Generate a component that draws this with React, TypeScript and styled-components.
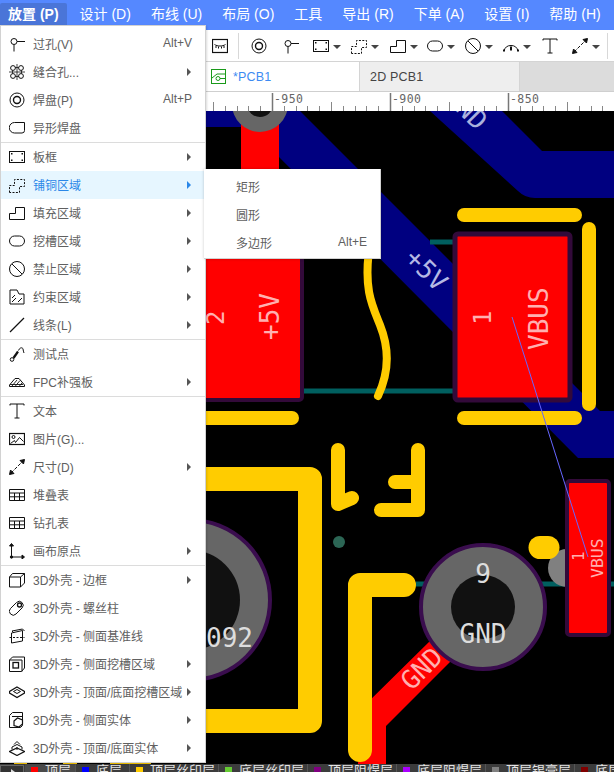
import React from "react";
import styled, { createGlobalStyle } from "styled-components";

const Global = createGlobalStyle`
  html, body { margin: 0; padding: 0; background: #fff; }
  body { font-family: "Liberation Sans", "Noto Sans CJK SC", sans-serif; }
  #root { width: 614px; height: 772px; overflow: hidden; }
`;

const Page = styled.div`
  position: relative;
  width: 614px;
  height: 772px;
  overflow: hidden;
  display: flex;
  flex-direction: column;
`;
const TopBar = styled.div`
  height: 30px;
  flex: none;
  background: #5588ff;
  display: flex;
  align-items: flex-start;
  padding-top: 3px;
  box-sizing: border-box;
`;
const TopItem = styled.div<{ $active?: boolean }>`
  height: 22px;
  line-height: 22px;
  padding: 0 ${(p) => (p.$active ? "8px" : "10px")};
  margin-right: ${(p) => (p.$active ? "3px" : "0")};
  font-size: 14px;
  white-space: nowrap;
  color: #fff;
  font-weight: ${(p) => (p.$active ? 700 : 400)};
  background: ${(p) => (p.$active ? "#4a75d8" : "transparent")};
  border-radius: 2px 2px 0 0;
`;
const Toolbar = styled.div`
  height: 32px;
  flex: none;
  background: #fff;
  border-bottom: 1px solid #d4d4d4;
  box-sizing: border-box;
  display: flex;
  align-items: center;
  padding-left: 212px;
`;
const ToolSep = styled.div<{ $l?: number; $r?: number }>`
  width: 1px;
  height: 26px;
  flex: none;
  background: #d8d8d8;
  margin-left: ${(p) => p.$l ?? 0}px;
  margin-right: ${(p) => p.$r ?? 0}px;
`;
const ToolBtn = styled.div<{ $w: number }>`
  width: ${(p) => p.$w}px;
  display: flex;
  align-items: center;
  flex: none;
`;
const Caret = styled.span`
  width: 0;
  height: 0;
  margin-left: -4px;
  margin-top: 2px;
  border-left: 4px solid transparent;
  border-right: 4px solid transparent;
  border-top: 4px solid #444;
`;
const Tabs = styled.div`
  height: 30px;
  flex: none;
  background: #dcdcdc;
  border-bottom: 1px solid #cfcfcf;
  box-sizing: border-box;
  display: flex;
  padding-left: 206px;
`;
const Tab = styled.div<{ $active?: boolean; $w: number }>`
  width: ${(p) => p.$w}px;
  box-sizing: border-box;
  display: flex;
  align-items: center;
  gap: 7px;
  padding-left: ${(p) => (p.$active ? "5px" : "10px")};
  background: ${(p) => (p.$active ? "#fff" : "#eeeeee")};
  border-right: 1px solid #d4d4d4;
  font-size: 12.5px;
  color: ${(p) => (p.$active ? "#3d8bf2" : "#444")};
  letter-spacing: 0.2px;
`;
const RulerSvg = styled.svg`
  display: block;
  flex: none;
  background: #fff;
`;
const Board = styled.svg`
  display: block;
  flex: 1;
  min-height: 0;
  background: #000;
`;
const LayerBar = styled.div`
  height: 8px;
  flex: none;
  background: #3c3c3c;
  display: flex;
  overflow: hidden;
`;
const LayerArrow = styled.div`
  position: relative;
  width: 24px;
  height: 10px;
  margin: 1px 1px 0 0;
  box-sizing: border-box;
  border: 1px solid #666;
  background: #333;
  flex: none;
  &::after {
    content: "";
    position: absolute;
    left: 10px;
    top: 3px;
    border-top: 3px solid transparent;
    border-bottom: 3px solid transparent;
    border-left: 4px solid #ddd;
  }
`;
const LayerTab = styled.div<{ $w: number; $active?: boolean }>`
  width: ${(p) => p.$w}px;
  flex: none;
  box-sizing: border-box;
  display: flex;
  padding-left: 6px;
  background: ${(p) => (p.$active ? "#4a4a4a" : "#3c3c3c")};
  border-right: 1px solid #555;
  color: #e4e4e4;
  font-size: 13px;
  line-height: 14px;
  white-space: nowrap;
  overflow: hidden;
`;
const Swatch = styled.span<{ $c: string }>`
  width: 7px;
  height: 7px;
  box-sizing: border-box;
  margin-top: 3px;
  margin-right: 7px;
  flex: none;
  background: ${(p) => p.$c};
`;

const Menu = styled.div`
  position: absolute;
  left: 0;
  top: 25px;
  width: 206px;
  height: 738px;
  box-sizing: border-box;
  background: #fff;
  border: 1px solid #d2d2d2;
  padding-top: 4px;
  box-shadow: 1px 1px 2px rgba(0, 0, 0, 0.15);
`;
const Group = styled.div`
  & + & {
    border-top: 1px solid #dcdcdc;
  }
`;
const Row = styled.div<{ $hover?: boolean }>`
  position: relative;
  height: 28px;
  display: flex;
  align-items: center;
  padding-left: 8px;
  background: ${(p) => (p.$hover ? "#e6f6ff" : "transparent")};
  color: ${(p) => (p.$hover ? "#2a87e8" : "#606060")};
  font-size: 12px;
  white-space: nowrap;
`;
const IconSvg = styled.svg`
  width: 16px;
  height: 16px;
  flex: none;
  margin-right: 8px;
  fill: none;
  stroke: #111;
  stroke-width: 1;
`;
const Label = styled.span`
  flex: 1;
  min-width: 0;
  margin-bottom: 2px;
`;
const Shortcut = styled.span`
  margin-right: 13px;
  margin-bottom: 2px;
`;
const Arrow = styled.span<{ $hover?: boolean }>`
  width: 0;
  height: 0;
  margin-right: 14px;
  border-top: 4px solid transparent;
  border-bottom: 4px solid transparent;
  border-left: 4px solid ${(p) => (p.$hover ? "#2a87e8" : "#555")};
`;
const Sub = styled.div`
  position: absolute;
  left: 203px;
  top: -2px;
  width: 177px;
  height: 90px;
  box-sizing: border-box;
  padding-top: 4px;
  background: #fff;
  border-bottom: 1px solid #d2d2d2;
  border-right: 1px solid #d2d2d2;
  box-shadow: 0 0 3px rgba(0, 0, 0, 0.2);
  z-index: 2;
`;
const SubRow = styled.div`
  height: 28px;
  box-sizing: border-box;
  padding: 0 13px 2px 32px;
  display: flex;
  align-items: center;
  justify-content: space-between;
  font-size: 12px;
  color: #606060;
`;

const I = ({ children }: { children: React.ReactNode }) => (
  <IconSvg viewBox="0 0 16 16">{children}</IconSvg>
);

const dots = (pts: number[][]) =>
  pts.map(([x, y], i) => <rect key={i} x={x} y={y} width={1.5} height={1.5} fill="#111" stroke="none" />);

const icons: Record<string, React.ReactNode> = {
  via: (
    <>
      <circle cx="5" cy="5.5" r="3" />
      <path d="M8 5.5h8M5 8.5v7" />
    </>
  ),
  stitch: (
    <>
      <path d="M3.5 3.5h9v9h-9zM8 0v16M0 8h16" strokeWidth=".8" />
      <circle cx="4" cy="4" r="2.4" fill="#fff" />
      <circle cx="12" cy="4" r="2.4" fill="#fff" />
      <circle cx="4" cy="12" r="2.4" fill="#fff" />
      <circle cx="12" cy="12" r="2.4" fill="#fff" />
    </>
  ),
  pad: (
    <>
      <circle cx="8" cy="8" r="7" />
      <circle cx="8" cy="8" r="3.5" strokeWidth="1.4" />
    </>
  ),
  shape: <path d="M5.5 2.5h10v8a2.5 2.5 0 0 1-2.5 2.5H5.5a5.2 5.2 0 0 1 0-10.5z" />,
  board: (
    <>
      <rect x=".5" y="2.5" width="15" height="11" />
      {dots([[2, 4], [12.5, 4], [2, 10.5], [12.5, 10.5]])}
    </>
  ),
  copper: <path d="M.5 15.5v-7h5v-6h10v7h-5v6z" strokeDasharray="2 1.4" />,
  fill: <path d="M.5 14.5v-6h6v-6h9v12z" />,
  slot: <rect x=".5" y="3" width="15" height="10" rx="5" />,
  forbid: (
    <>
      <circle cx="8" cy="8" r="7.5" />
      <path d="M3 3l10 10" />
    </>
  ),
  keep: (
    <>
      <path d="M1 1h7l2 4h5v10H1z" />
      <path d="M3 9l3-3M3 13l4-4M9 13l4-4" />
    </>
  ),
  line: <path d="M1 15L15 1" strokeWidth="1.2" />,
  test: (
    <>
      <circle cx="3" cy="13.5" r="1.8" />
      <path d="M4.5 12L9 5.5" strokeWidth="2.2" />
      <path d="M9.5 4.5c1-3 4-3.5 4.5-1.5.3 1.3.5 3 1 4" />
    </>
  ),
  fpc: (
    <>
      <path d="M.5 11L6 4.5h4l5.5 6.5v1.5H.5z" />
      <path d="M3 12l5-6M6 12.5l5-6M10 12.5l3-3.5M1 10.5h13" strokeWidth=".9" />
    </>
  ),
  text: <path d="M1 2.5V1h14v1.5M8 1v14M5.5 15h5" />,
  image: (
    <>
      <rect x=".5" y="2.5" width="15" height="11" strokeWidth="1.2" />
      <circle cx="4.5" cy="6" r="1.5" />
      <path d="M1.5 12.5l4-3 1 2 4-5 4 4" />
    </>
  ),
  dim: (
    <>
      <path d="M2 14L14 2" strokeDasharray="3.5 1.5" />
      <path d="M.5 15.5l4.5-1-3.5-3.5zM15.5.5l-4.5 1 3.5 3.5z" fill="#111" />
    </>
  ),
  table: <path d="M.5 2.5h15v11H.5zM.5 6h15M.5 9.8h15M5.5 6v7.5M10.5 6v7.5" />,
  origin: (
    <>
      <path d="M2.5 2v12h12" />
      <path d="M2.5 .5l-2 2.5h4zM15.5 14l-2.5-2v4z" fill="#111" />
      <circle cx="2.5" cy="14" r="1.2" fill="#111" />
    </>
  ),
  b3d: <path d="M.5 5h11v10H.5zM.5 5l3-3.5h12V11l-4 4M11.5 5l4-3.5" />,
  screw: (
    <>
      <path d="M1.5 8.5l6-6a3.8 3.8 0 0 1 5.5 5.5l-6 6a3.8 3.8 0 0 1-5.5-5.5z" />
      <circle cx="10.5" cy="5" r="2" strokeWidth="1.3" />
    </>
  ),
  side: (
    <>
      <path d="M2.5 5l11-2.5v10.5l-11 2z" />
      <path d="M.5 9.5h15" strokeDasharray="2 1.5" />
      <path d="M5 5l-2-2 10.5-2 2 2" />
    </>
  ),
  sideslot: (
    <>
      <path d="M.5 4l3-3h12v11l-3 3.5H.5z" />
      <path d="M.5 4h12.5v11.5" />
      <rect x="4" y="6.5" width="5.5" height="5.5" strokeWidth="1.3" />
    </>
  ),
  topslot: (
    <>
      <path d="M8 3l7.5 4.5v1.5L8 13.5.5 9V7.5z" strokeWidth="1.2" />
      <path d="M8 5.5l3.5 2L8 9.5l-3.5-2z" />
    </>
  ),
  sidesolid: (
    <>
      <path d="M.5 3.5l3-3h10v13l-2 2H.5z" />
      <path d="M3 4.5h10" />
      <path d="M5 9l3.5-3 5 2v4l-3.5 3-5-1.5z" fill="#fff" strokeWidth="1.2" />
    </>
  ),
  topsolid: (
    <>
      <path d="M8 8l7.5 3.5L8 15.5.5 11.5z" strokeWidth="1.2" />
      <path d="M3 9.5V7l5-2.5L13 7v2.5M8 10V7" />
      <path d="M5 4.5l3-3 3 3" />
    </>
  ),
  arc: (
    <>
      <path d="M1 13a7.2 7.2 0 0 1 14 0" />
      <path d="M8 8.5v4" strokeWidth="2" />
      <path d="M1 11.5v2M15 11.5v2" strokeWidth="2" />
    </>
  ),
  eye: (
    <>
      <rect x=".5" y="1.5" width="15" height="13" strokeWidth="1.2" />
      <path d="M2.5 6.5c3 2 8 2 11 0M4 8v2M6.5 8.5v2M9.5 8.5v2M12 8v2" />
    </>
  ),
};

type Item = { i: string; t: string; k?: string; a?: boolean; hover?: boolean };
const groups: Item[][] = [
  [
    { i: "via", t: "过孔(V)", k: "Alt+V" },
    { i: "stitch", t: "缝合孔...", a: true },
    { i: "pad", t: "焊盘(P)", k: "Alt+P" },
    { i: "shape", t: "异形焊盘" },
  ],
  [
    { i: "board", t: "板框", a: true },
    { i: "copper", t: "铺铜区域", a: true, hover: true },
    { i: "fill", t: "填充区域", a: true },
    { i: "slot", t: "挖槽区域", a: true },
    { i: "forbid", t: "禁止区域", a: true },
    { i: "keep", t: "约束区域", a: true },
    { i: "line", t: "线条(L)", a: true },
  ],
  [
    { i: "test", t: "测试点" },
    { i: "fpc", t: "FPC补强板", a: true },
  ],
  [
    { i: "text", t: "文本" },
    { i: "image", t: "图片(G)..." },
    { i: "dim", t: "尺寸(D)", a: true },
    { i: "table", t: "堆叠表" },
    { i: "table", t: "钻孔表" },
    { i: "origin", t: "画布原点", a: true },
  ],
  [
    { i: "b3d", t: "3D外壳 - 边框", a: true },
    { i: "screw", t: "3D外壳 - 螺丝柱" },
    { i: "side", t: "3D外壳 - 侧面基准线" },
    { i: "sideslot", t: "3D外壳 - 侧面挖槽区域", a: true },
    { i: "topslot", t: "3D外壳 - 顶面/底面挖槽区域", a: true },
    { i: "sidesolid", t: "3D外壳 - 侧面实体", a: true },
    { i: "topsolid", t: "3D外壳 - 顶面/底面实体", a: true },
  ],
];

const topItems = ["设计 (D)", "布线 (U)", "布局 (O)", "工具", "导出 (R)", "下单 (A)", "设置 (I)", "帮助 (H)"];

const tools: { i: string; caret?: boolean; w: number }[] = [
  { i: "pad", w: 32 },
  { i: "via", w: 30 },
  { i: "board", caret: true, w: 38 },
  { i: "copper", caret: true, w: 39 },
  { i: "fill", caret: true, w: 37 },
  { i: "slot", caret: true, w: 38 },
  { i: "forbid", caret: true, w: 38 },
  { i: "arc", caret: true, w: 39 },
  { i: "text", w: 30 },
  { i: "dim", caret: true, w: 35 },
];

const layers = [
  { c: "#ff0000", t: "顶层", w: 51, active: true },
  { c: "#0000ff", t: "底层", w: 54 },
  { c: "#ffcc00", t: "顶层丝印层", w: 89 },
  { c: "#66cc33", t: "底层丝印层", w: 89 },
  { c: "#800080", t: "顶层阻焊层", w: 89 },
  { c: "#aa00ff", t: "底层阻焊层", w: 89 },
  { c: "#808080", t: "顶层锡膏层", w: 89 },
  { c: "#800000", t: "底层锡膏层", w: 89 },
];

const Ruler = () => {
  const ticks = [];
  for (let n = -12; n < 40; n++) {
    const x = 272 + n * 11.8;
    if (x < 206 || x > 614) continue;
    const major = n % 10 === 0;
    const mid = n % 5 === 0;
    const y = major ? 1 : mid ? 10 : 14;
    ticks.push(
      <line
        key={n}
        x1={Math.round(x) + 0.5}
        x2={Math.round(x) + 0.5}
        y1={y}
        y2={19}
        stroke={major ? "#777" : "#888"}
        strokeWidth={major ? 1.5 : 1}
      />
    );
  }
  return (
    <RulerSvg width="614" height="19" viewBox="0 0 614 19">
      {ticks}
      {[
        [274, "-950"],
        [392, "-900"],
        [510, "-850"],
      ].map(([x, t]) => (
        <text key={t as string} x={x as number} y="11" fontFamily="'DejaVu Sans Mono', monospace" fontSize="11.5" fill="#666" letterSpacing=".4">
          {t}
        </text>
      ))}
    </RulerSvg>
  );
};

const mono = "'DejaVu Sans Mono', monospace";
const Y = "#ffcc00";
const PURPLE = "#330a3a";

const PcbCanvas = () => (
  <Board viewBox="0 111 614 653" width="614" height="653">
    {/* bottom layer */}
    <rect x="200" y="111" width="41" height="16" fill="#000080" />
    <polygon points="279,111 300,111 600,411 614,411 614,458 578,458 279,157" fill="#000080" />
    <path d="M430 111H502L542 151H614V198H535Q525 198 518 191Z" fill="#000080" />
    <text transform="translate(460 115) rotate(45)" textAnchor="middle" fontFamily={mono} fontSize="26" fill="#aab0dd">
      GND
    </text>
    <text transform="translate(420 276) rotate(45)" textAnchor="middle" fontFamily={mono} fontSize="26" fill="#b4b8e4">
      +5V
    </text>
    {/* teal */}
    <g stroke="#005f5f" strokeWidth="5">
      <line x1="300" y1="391" x2="457" y2="391" />
      <line x1="430" y1="242" x2="457" y2="242" />
      <line x1="416" y1="584" x2="614" y2="584" />
    </g>
    {/* top red */}
    <rect x="241" y="111" width="38" height="70" fill="#ff0000" />
    <circle cx="260" cy="104" r="28" fill="#666" />
    <circle cx="260" cy="104" r="13" fill="#111" />
    {/* left pad */}
    <rect x="190" y="232" width="112" height="168" rx="3" fill="#ff0000" stroke={PURPLE} strokeWidth="4" />
    <text transform="translate(279 340) rotate(-90)" fontFamily={mono} fontSize="26" fill="#ffb0b0">
      +5V
    </text>
    <text transform="translate(224 325) rotate(-90)" fontFamily={mono} fontSize="24" fill="#ffb0b0">
      2
    </text>
    {/* right pad */}
    <rect x="455" y="234" width="115" height="166" rx="3" fill="#ff0000" stroke={PURPLE} strokeWidth="5" />
    <text transform="translate(491 325) rotate(-90)" fontFamily={mono} fontSize="24" fill="#ffb0b0">
      1
    </text>
    <text transform="translate(548 350) rotate(-90)" fontFamily={mono} fontSize="26" fill="#ffb0b0">
      VBUS
    </text>
    {/* silkscreen */}
    <g stroke={Y} fill="none" strokeLinecap="round" strokeLinejoin="round">
      <g strokeWidth="14">
        <line x1="464" y1="215" x2="575" y2="215" />
        <line x1="464" y1="418" x2="575" y2="418" />
        <line x1="589" y1="229" x2="589" y2="404" />
        <line x1="190" y1="418" x2="292" y2="418" />
        <path d="M338 450V504L352 498" />
        <path d="M418 450V510H381M395 482H418" />
      </g>
      <path d="M369 250C364 290 372 305 380 325C390 350 388 375 378 396" strokeWidth="8" />
      <path d="M190 479H310V721H190" strokeWidth="24" />
    </g>
    <circle cx="339" cy="542" r="6" fill="#2c6655" />
    {/* stray silk under the menu */}
    <g fill={Y}>
      <rect x="14" y="763" width="13" height="1" />
      <rect x="63" y="763" width="14" height="1" />
      <rect x="110" y="763" width="41" height="1" />
    </g>
    {/* big left pad */}
    <circle cx="190" cy="600" r="80" fill="#666" stroke="#3a0d4e" strokeWidth="4" />
    <circle cx="190" cy="600" r="50" fill="#111" />
    <text x="253" y="647" textAnchor="end" fontFamily={mono} fontSize="26" fill="#dddddd">
      092
    </text>
    {/* GND trace */}
    <polygon points="361,709 431,640 452,660 386,726 386,764 358,764" fill="#ff0000" />
    <text transform="translate(428 675) rotate(-45)" textAnchor="middle" fontFamily={mono} fontSize="26" fill="#ffb0b0">
      GND
    </text>
    <path d="M404 585H360V750" stroke={Y} strokeWidth="24" fill="none" strokeLinecap="round" strokeLinejoin="round" />
    {/* pad 9 */}
    <circle cx="483" cy="607" r="62" fill="#666" stroke="#3a0d4e" strokeWidth="4" />
    <circle cx="483" cy="607" r="32" fill="#111" />
    <text x="483" y="583" textAnchor="middle" fontFamily={mono} fontSize="26" fill="#dddddd">
      9
    </text>
    <text x="483" y="643" textAnchor="middle" fontFamily={mono} fontSize="26" fill="#dddddd">
      GND
    </text>
    {/* small pad */}
    <circle cx="567" cy="568" r="19" fill="#808080" />
    <line x1="540" y1="547.5" x2="548" y2="547.5" stroke={Y} strokeWidth="23" strokeLinecap="round" />
    <rect x="567" y="481" width="42" height="154" rx="3" fill="#ff0000" stroke={PURPLE} strokeWidth="4" />
    <text transform="translate(603 578) rotate(-90)" fontFamily={mono} fontSize="16.5" fill="#ffb0b0">
      VBUS
    </text>
    <text transform="translate(584 561) rotate(-90)" fontFamily={mono} fontSize="16" fill="#ffb0b0">
      1
    </text>
    <line x1="512" y1="317" x2="588" y2="557" stroke="#6666ff" strokeWidth="1" />
  </Board>
);

export default function App() {
  return (
    <Page>
      <Global />
      <TopBar>
        <TopItem $active>放置 (P)</TopItem>
        {topItems.map((t) => (
          <TopItem key={t}>{t}</TopItem>
        ))}
      </TopBar>
      <Toolbar>
        <IconSvg viewBox="0 0 16 16">{icons.eye}</IconSvg>
        <ToolSep $l={2} $r={12} />
        {tools.map((t, i) => (
          <ToolBtn key={i} $w={t.w}>
            <I>{icons[t.i]}</I>
            {t.caret && <Caret />}
          </ToolBtn>
        ))}
        <ToolSep />
      </Toolbar>
      <Tabs>
        <Tab $active $w={154}>
          <svg width="15" height="15" viewBox="0 0 15 15" fill="none" stroke="#1a9a1a" strokeWidth="1">
            <rect x=".5" y=".5" width="14" height="14" />
            <path d="M14 5H6L1 9" />
            <circle cx="7" cy="9.5" r="2" />
            <path d="M9 9.5h5" />
          </svg>
          <span>*PCB1</span>
        </Tab>
        <Tab $w={160}>2D PCB1</Tab>
      </Tabs>
      <Ruler />
      <PcbCanvas />
      <LayerBar>
        <LayerArrow />
        {layers.map((l) => (
          <LayerTab key={l.t} $w={l.w} $active={l.active}>
            <Swatch $c={l.c} />
            {l.t}
          </LayerTab>
        ))}
      </LayerBar>
      <Menu>
        {groups.map((g, gi) => (
          <Group key={gi}>
            {g.map((it) => (
              <Row key={it.t} $hover={it.hover}>
                <I>{icons[it.i]}</I>
                <Label>{it.t}</Label>
                {it.k && <Shortcut>{it.k}</Shortcut>}
                {it.a && <Arrow $hover={it.hover} />}
                {it.hover && (
                  <Sub>
                    <SubRow>矩形</SubRow>
                    <SubRow>圆形</SubRow>
                    <SubRow>
                      <span>多边形</span>
                      <span>Alt+E</span>
                    </SubRow>
                  </Sub>
                )}
              </Row>
            ))}
          </Group>
        ))}
      </Menu>
    </Page>
  );
}
